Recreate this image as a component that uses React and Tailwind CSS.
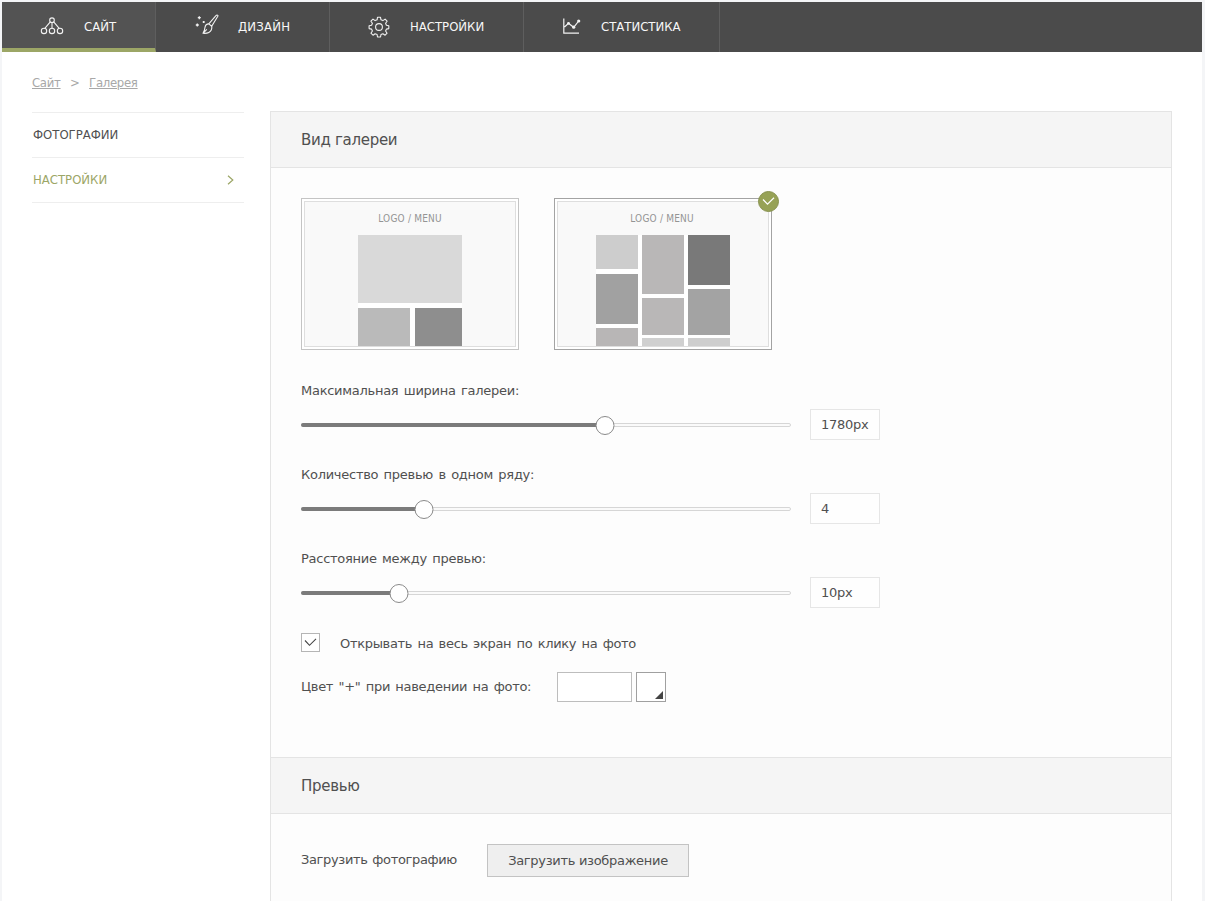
import React, { useState } from 'react';

const SiteIcon = () => (
  <svg width="24" height="20" viewBox="0 0 24 20" fill="none" stroke="#f2f2f2" strokeWidth="1.1">
    <circle cx="12" cy="3.200" r="2.300" />
    <circle cx="4" cy="13.900" r="2.700" />
    <circle cx="12" cy="13.900" r="2.700" />
    <circle cx="20" cy="13.900" r="2.700" />
    <path d="M10.300 4.900 4.800 11.300M12 5.500v5.700M13.700 4.900l5.500 6.400" />
  </svg>
);

const DesignIcon = () => (
  <svg width="24" height="22" viewBox="0 0 24 22" fill="none" stroke="#f2f2f2" strokeWidth="1.1" strokeLinejoin="round" className="-mt-1">
    <path d="M22.800 1.300c-.5-.5-1.400-.2-2.100.5L13.800 9.900l2.900 2.300 5.800-9.400c.4-.7.6-1.200.3-1.500Z" />
    <path d="M13.800 9.900c-2.200.1-3.500 1.400-3.800 3.400-.2 2.200-.6 3.800-2 6 3.400.3 7-.6 8.300-3.300.6-1.300.7-2.600.4-3.800M8 19.300l3.800-4" />
    <path d="M4.300 2.200v3M2.800 3.700h3M2.300 9.500v3M.8 11h3M8.700 7v2M7.700 8h2" strokeWidth="1.300" />
  </svg>
);

const GearIcon = () => (
  <svg width="22" height="22" viewBox="0 0 22 22" fill="none" stroke="#f2f2f2" strokeWidth="1.1" strokeLinejoin="round">
    <circle cx="11" cy="11" r="3.400" />
    <path d="M9.500 1.300h3l.5 2.500 1.900.8 2.200-1.500 2 2.100-1.500 2.100.8 2 2.400.4v2.900l-2.400.5-.8 1.900 1.500 2.200-2 2-2.200-1.500-1.900.8-.5 2.500h-3l-.4-2.500-2-.8-2.100 1.500-2.100-2 1.500-2.200-.8-1.900-2.500-.5V9.700l2.500-.4.8-2-1.500-2.100L5 3.100l2.100 1.500 2-.8Z" />
  </svg>
);

const StatsIcon = () => (
  <svg width="18" height="18" viewBox="0 0 18 18" fill="none" stroke="#f2f2f2" strokeWidth="1.200">
    <path d="M.8.500v14.600h15.200M1.500 9l4-3.800 5.200 4.100 5-6.300" />
    <g fill="#f2f2f2" stroke="none">
      <circle cx="5.500" cy="5.300" r="1.400" />
      <circle cx="10.700" cy="9.200" r="1.600" />
      <circle cx="15.700" cy="3" r="1.600" />
    </g>
  </svg>
);

const TABS = [
  { label: 'САЙТ', icon: <SiteIcon />, box: 'w-[154px] pl-[38px]', slot: 'w-[44px]' },
  { label: 'ДИЗАЙН', icon: <DesignIcon />, box: 'w-[174px] pl-[39px] tracking-[0.2px]', slot: 'w-[43px]' },
  { label: 'НАСТРОЙКИ', icon: <GearIcon />, box: 'w-[194px] pl-[38px]', slot: 'w-[42px]' },
  { label: 'СТАТИСТИКА', icon: <StatsIcon />, box: 'w-[196px] pl-[39px]', slot: 'w-[38px]' },
];

const TopNav = () => (
  <nav className="flex h-[50px] bg-[#4b4b4b] text-[13px] text-[#f8f8f8] font-['DejaVu_Sans_Condensed','DejaVu_Sans',sans-serif]">
    {TABS.map((tab, i) => (
      <a
        key={tab.label}
        href="#"
        className={`${tab.box} flex items-center border-r border-[#5e5e5e] ${i === 0 ? 'bg-[#535353] border-b-4 border-b-[#9ca666] pt-1' : ''}`}
      >
        <span className={`${tab.slot} shrink-0`}>{tab.icon}</span>
        <span className="pb-px">{tab.label}</span>
      </a>
    ))}
  </nav>
);

const Sidebar = () => (
  <aside className="w-[212px] mt-px text-[13px] font-['DejaVu_Sans_Condensed','DejaVu_Sans',sans-serif]">
    <a href="#" className="flex h-[45px] items-center border-t border-[#eeeeee] pl-px text-[#505050]">
      <span className="pb-px">ФОТОГРАФИИ</span>
    </a>
    <a href="#" className="flex h-[46px] items-center justify-between border-y border-[#eeeeee] pl-px pr-2.5 text-[#9ca666]">
      <span className="pb-px">НАСТРОЙКИ</span>
      <svg width="7" height="10" viewBox="0 0 7 10" fill="none" stroke="#9ca666" strokeWidth="1.2">
        <path d="m1 .8 4.800 4.200L1 9.200" />
      </svg>
    </a>
  </aside>
);

const Thumb = ({ active, children }) => (
  <button className={`relative h-[152px] w-[218px] border bg-white p-0.5 ${active ? 'border-[#a3a3a3]' : 'border-[#c4c4c4]'}`}>
    <div className="flex h-full flex-col items-center border border-[#dedede] bg-[#f9f9f9]">
      <div className={`mt-2 h-[25px] text-[10px] leading-[17px] tracking-[0.2px] text-[#949494] font-['DejaVu_Sans_Condensed','DejaVu_Sans',sans-serif] ${active ? 'pr-0.5' : ''}`}>LOGO / MENU</div>
      {children}
    </div>
    {active && (
      <span className="absolute -right-2 -top-2 flex size-[21px] items-center justify-center rounded-full border border-[#87914f] bg-[#97a256]">
        <svg width="13" height="9" viewBox="0 0 13 9" fill="none" stroke="#fff" strokeWidth="1.200">
          <path d="m1 2.500 4.500 4.700L12 .8" />
        </svg>
      </span>
    )}
  </button>
);

const Slider = ({ label, min, max, step, value, suffix = '', onChange }) => {
  const percent = ((value - min) / (max - min)) * 100;
  return (
    <div className="flex h-[84px] flex-col">
      <label className="h-[29px] leading-[22px]">{label}</label>
      <div className="flex h-[31px] items-center">
        <div className="relative mr-[19px] flex h-[19px] w-[490px] items-center">
          <div className="h-1 w-full overflow-hidden rounded-full border border-[#d6d6d6] bg-[#fafafa]" />
          <div className="absolute left-0 h-1 rounded-full bg-[#7b7b7b]" style={{ width: `${percent}%` }} />
          <div className="absolute top-0.5 size-[19px] -translate-x-1/2 -translate-y-px rounded-full border border-[#8a8a8a] bg-white" style={{ left: `${percent}%` }} />
          <input
            type="range"
            aria-label={label}
            min={min}
            max={max}
            step={step}
            value={value}
            onChange={(e) => onChange(Number(e.target.value))}
            className="absolute inset-0 w-full cursor-pointer opacity-0"
          />
        </div>
        <div className="flex h-[31px] w-[70px] items-center border border-[#e6e6e6] bg-[#fefefe] pl-2.5">{value}{suffix}</div>
      </div>
    </div>
  );
};

const SectionTitle = ({ children }) => (
  <h2 className="flex h-[57px] items-center border-y border-[#e4e4e4] bg-[#f5f5f5] pl-[30px] pt-0.5 text-[15px] tracking-[-0.3px]">{children}</h2>
);

const App = () => {
  const [width, setWidth] = useState(1780);
  const [columns, setColumns] = useState(4);
  const [gap, setGap] = useState(10);
  const [fullscreen, setFullscreen] = useState(true);

  return (
    <div className="h-[901px] overflow-hidden bg-[#f4f5f7] pl-0.5 pr-[3px] pt-0.5 text-[13px] text-[#505050] font-['DejaVu_Sans',sans-serif]">
      <div className="h-full bg-white">
        <TopNav />

        {/* Breadcrumbs */}
        <div className="flex h-[59px] gap-[9.5px] pl-[30px] pt-[21px] leading-5 tracking-[-0.3px] text-[#a8a8a8] font-['DejaVu_Sans_Condensed','DejaVu_Sans',sans-serif]">
          <a href="#" className="underline">Сайт</a>
          <span>&gt;</span>
          <a href="#" className="underline">Галерея</a>
        </div>

        <div className="flex gap-[26px] pl-[30px]">
          <Sidebar />

          <main className="h-[800px] w-[902px] border-x border-[#e4e4e4] bg-[#fdfdfd]">
            <SectionTitle>Вид галереи</SectionTitle>
            <section className="h-[589px] pl-[30px] pt-[30px] tracking-[-0.27px] [word-spacing:1.5px]">
              <div className="flex gap-[35px]">
                <Thumb>
                  <div className="flex w-[104px] flex-col gap-[5px] bg-white">
                    <div className="h-[68px] bg-[#d9d9d9]" />
                    <div className="flex h-[38px] gap-[5px]">
                      <div className="w-[52px] bg-[#bababa]" />
                      <div className="flex-1 bg-[#8e8e8e]" />
                    </div>
                  </div>
                </Thumb>
                <Thumb active>
                  <div className="flex h-[111px] gap-1 bg-white">
                    <div className="flex w-[42px] flex-col">
                      <div className="h-[34px] bg-[#cdcdcd]" />
                      <div className="mt-[5px] h-[50px] bg-[#a1a1a1]" />
                      <div className="mt-1 h-[18px] bg-[#b8b6b6]" />
                    </div>
                    <div className="flex w-[42px] flex-col">
                      <div className="h-[59px] bg-[#b9b7b7]" />
                      <div className="mt-1 h-[37px] bg-[#b9b7b7]" />
                      <div className="mt-[3px] h-2 bg-[#d0d0d0]" />
                    </div>
                    <div className="flex w-[42px] flex-col">
                      <div className="h-[50px] bg-[#797979]" />
                      <div className="mt-1 h-[46px] bg-[#a3a3a3]" />
                      <div className="mt-[3px] h-2 bg-[#cecece]" />
                    </div>
                  </div>
                </Thumb>
              </div>

              <div className="mt-[30px]">
                <Slider label="Максимальная ширина галереи:" min={340} max={2660} step={20} value={width} suffix="px" onChange={setWidth} />
                <Slider label="Количество превью в одном ряду:" min={1} max={13} step={1} value={columns} onChange={setColumns} />
                <Slider label="Расстояние между превью:" min={0} max={50} step={1} value={gap} suffix="px" onChange={setGap} />
              </div>

              <label className="flex h-[19px] items-center mt-px">
                <input type="checkbox" checked={fullscreen} onChange={() => setFullscreen(!fullscreen)} className="sr-only" />
                <span className="mr-5 flex size-[19px] items-center justify-center border border-[#b5b5b5] bg-white">
                  {fullscreen && (
                    <svg width="13" height="9" viewBox="0 0 13 9" fill="none" stroke="#444" strokeWidth="1.100">
                      <path d="m1 2.500 4.500 4.800L12 .8" />
                    </svg>
                  )}
                </span>
                <span className="pt-0.5 tracking-[-0.32px]">Открывать на весь экран по клику на фото</span>
              </label>

              <div className="mt-5 flex h-[30px] items-center">
                <span className="w-[256px] tracking-[-0.3px]">Цвет "+" при наведении на фото:</span>
                <div className="mr-1 h-[30px] w-[75px] border border-[#bdbdbd] bg-white" />
                <button className="flex size-[30px] items-end justify-end border border-[#a0a0a0] bg-white p-0.5">
                  <svg width="8" height="8" viewBox="0 0 8 8" fill="#444">
                    <path d="M8 0v8H0z" />
                  </svg>
                </button>
              </div>
            </section>

            <SectionTitle>Превью</SectionTitle>
            <section className="flex items-center pl-[30px] pt-[30px] tracking-[-0.35px] [word-spacing:1px]">
              <span className="w-[186px] pb-0.5">Загрузить фотографию</span>
              <button className="h-[33px] w-[202px] border border-[#c3c3c3] bg-[#efefef] tracking-[-0.3px]">Загрузить изображение</button>
            </section>
          </main>
        </div>
      </div>
    </div>
  );
};

export default App;
